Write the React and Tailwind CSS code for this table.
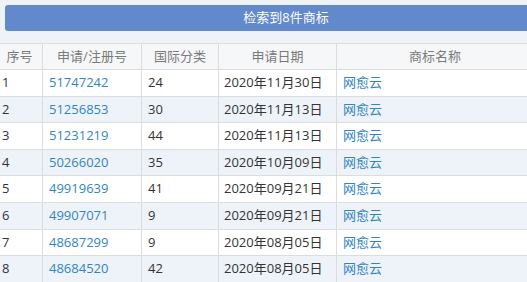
export default function App() {
  const rows = [
    ["1", "51747242", "24", "2020年11月30日"],
    ["2", "51256853", "30", "2020年11月13日"],
    ["3", "51231219", "44", "2020年11月13日"],
    ["4", "50266020", "35", "2020年10月09日"],
    ["5", "49919639", "41", "2020年09月21日"],
    ["6", "49907071", "9", "2020年09月21日"],
    ["7", "48687299", "9", "2020年08月05日"],
    ["8", "48684520", "42", "2020年08月05日"],
  ];
  const font = { fontFamily: '"Open Sans", "Noto Sans CJK SC", sans-serif' };
  return (
    <div className="w-[527px] h-[282px] overflow-hidden bg-[#eef3f8]" style={font}>
      <div className="pt-[5px] pl-[5px]">
        <div className="w-[562px] h-[26px] rounded-[3px] bg-[#6189cc] flex items-center justify-center text-white text-[13px]">
          检索到8件商标
        </div>
      </div>
      <div className="mt-[12px] w-[536px] ml-[-3px] text-[13px]">
        <div className="flex h-[27px] box-border border-y border-[#dcdcdc] bg-[#f6f7f9] text-[#7a7a7a]">
          <div className="w-[46px] shrink-0 border-r border-[#dcdcdc] flex items-center justify-center">序号</div>
          <div className="w-[99px] shrink-0 border-r border-[#dcdcdc] flex items-center justify-center">申请/注册号</div>
          <div className="w-[77px] shrink-0 border-r border-[#dcdcdc] flex items-center justify-center">国际分类</div>
          <div className="w-[118px] shrink-0 border-r border-[#dcdcdc] flex items-center justify-center">申请日期</div>
          <div className="flex-1 flex items-center justify-center">商标名称</div>
        </div>
        {rows.map((r, i) => (
          <div
            key={i}
            className={
              "flex h-[26.6px] box-border border-b border-[#dcdcdc] text-[#333] " +
              (i % 2 === 1 ? "bg-[#eef3fa]" : "bg-white")
            }
          >
            <div className="w-[46px] shrink-0 border-r border-[#dcdcdc] flex items-center pl-[5px]">{r[0]}</div>
            <div className="w-[99px] shrink-0 border-r border-[#dcdcdc] flex items-center pl-[6px] text-[#3384c4]">{r[1]}</div>
            <div className="w-[77px] shrink-0 border-r border-[#dcdcdc] flex items-center pl-[6px]">{r[2]}</div>
            <div className="w-[118px] shrink-0 border-r border-[#dcdcdc] flex items-center pl-[5px]">{r[3]}</div>
            <div className="flex-1 flex items-center pl-[6px] text-[#3384c4]">网愈云</div>
          </div>
        ))}
      </div>
    </div>
  );
}
